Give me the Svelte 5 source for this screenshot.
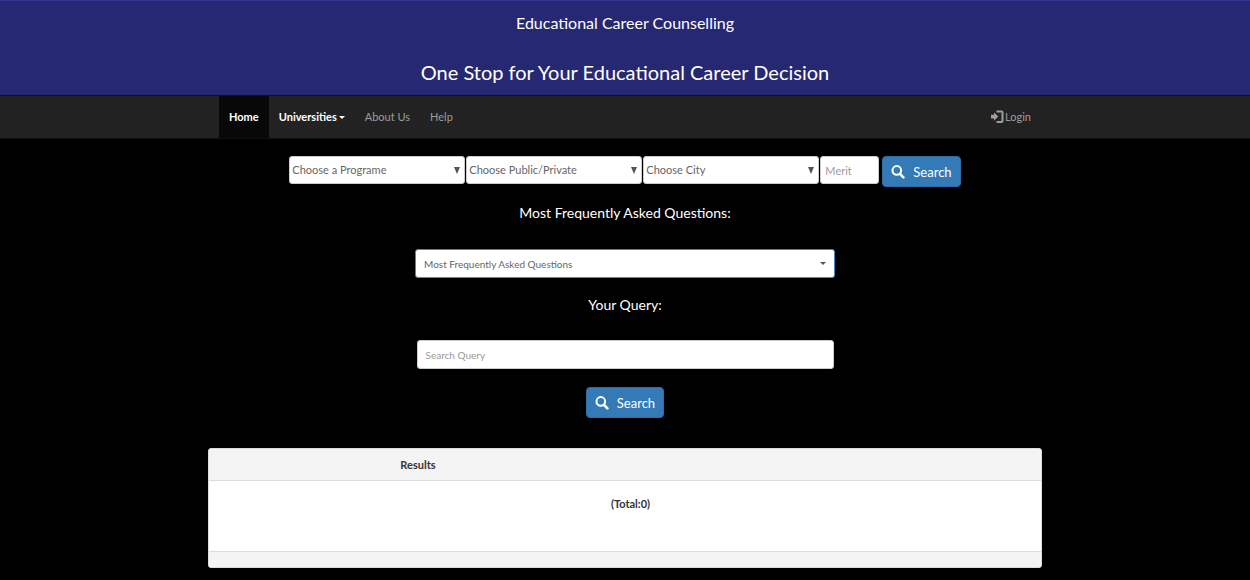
<script>
    const filters = [
        {name: "program", label: "Choose a Programe"},
        {name: "sector", label: "Choose Public/Private"},
        {name: "city", label: "Choose City"}
    ];

    let total = $state(0);
    let merit = $state("");
    let query = $state("");

    function search(event) {
        event.preventDefault();
    }
</script>

{#snippet searchButton()}
    <button class="search" type="submit">
        <svg viewBox="0 0 14 14" width="14" height="14" aria-hidden="true">
            <circle cx="5.8" cy="5.4" r="4.3" fill="none" stroke="currentColor" stroke-width="2" />
            <path d="M9 8.8l3.4 3.6" stroke="currentColor" stroke-width="2.6" stroke-linecap="round" />
        </svg>
        Search
    </button>
{/snippet}

<header>
    <p>Educational Career Counselling</p>
    <h1>One Stop for Your Educational Career Decision</h1>
</header>

<nav>
    <div class="container bar">
        <a class="active" href="#home">Home</a>
        <a class="bright" href="#universities">Universities <span class="caret"></span></a>
        <a href="#about">About Us</a>
        <a href="#help">Help</a>
        <a class="login" href="#login">
            <svg viewBox="0 0 14 14" width="14" height="14" aria-hidden="true">
                <path d="M1 4.8h3V2.4l4.4 4.2L4 10.8V8.4H1z" fill="currentColor" />
                <path d="M6.5 1.5h5q1 0 1 1v8.500q0 1-1 1h-5" fill="none" stroke="currentColor" stroke-width="2" />
            </svg>
            Login
        </a>
    </div>
</nav>

<main class="container">
    <form class="filters" onsubmit={search}>
        {#each filters as filter}
            <div class="select">
                <select name={filter.name} aria-label={filter.label}>
                    <option>{filter.label}</option>
                </select>
                <svg viewBox="0 0 6 7" width="6" height="7" aria-hidden="true"><path d="M0 0h6L3 7z" fill="currentColor" /></svg>
            </div>
        {/each}
        <input class="merit" type="text" placeholder="Merit" aria-label="Merit" bind:value={merit} />
        {@render searchButton()}
    </form>

    <form class="questions" onsubmit={search}>
        <label for="faq">Most Frequently Asked Questions:</label>
        <div class="select faq">
            <select id="faq">
                <option>Most Frequently Asked Questions</option>
            </select>
            <span class="caret"></span>
        </div>
        <label for="query">Your Query:</label>
        <input class="query" id="query" type="text" placeholder="Search Query" bind:value={query} />
        {@render searchButton()}
    </form>

    <section class="panel">
        <h2>Results</h2>
        <p>(Total:{total})</p>
        <footer></footer>
    </section>
</main>

<style>
    :global(body) {
        background-color: #000000;
        font-family: Lato, "Liberation Sans", sans-serif;
        font-size: 11px;
        line-height: 16px;
    }
    :global(body *) {
        box-sizing: border-box;
    }

    header {
        padding: 12px 16px 8px;
        background-color: #272872;
        border-top: 1px solid #34359a;
        color: white;
        text-align: center;
    }
    header p {
        margin: 0 0 24px;
        font-size: 16px;
        line-height: 20px;
    }
    h1 {
        margin: 0;
        font-size: 20px;
        font-weight: 400;
        line-height: 30px;
    }

    .container {
        max-width: 834px;
        margin: 0 auto;
    }

    nav {
        background-color: #222222;
        border-top: 1px solid #101010;
        border-bottom: 1px solid #101010;
    }
    .bar {
        display: flex;
        padding: 0 11px;
    }
    nav a {
        display: flex;
        align-items: center;
        height: 42px;
        padding: 0 10px;
        color: #9d9d9d;
        text-decoration: none;
    }
    nav .active {
        background-color: #080808;
        color: white;
        font-weight: 700;
    }
    nav .bright {
        color: white;
        font-weight: 700;
    }
    nav .login {
        gap: 1px;
        margin-left: auto;
        padding-right: 0;
    }
    .caret {
        border: 3px solid transparent;
        border-top: 3px solid currentColor;
        border-bottom: 0;
    }
    nav .caret {
        margin-left: 2px;
    }

    .filters {
        display: flex;
        flex-wrap: wrap;
        justify-content: center;
        gap: 1px;
        padding-top: 17px;
    }
    .select {
        display: grid;
        align-items: center;
        width: 176px;
        height: 28px;
        color: #555555;
    }
    .select > * {
        grid-area: 1 / 1;
    }
    .select svg,
    .select .caret {
        justify-self: end;
        margin-right: 5px;
        pointer-events: none;
    }
    select,
    input {
        height: 28px;
        border: 1px solid #cccccc;
        border-radius: 3px;
        background-color: white;
        color: #666666;
        font: inherit;
    }
    select {
        appearance: none;
        width: 100%;
        padding: 0 2px;
    }
    input::placeholder {
        color: #999999;
    }
    .merit {
        width: 59px;
        padding: 0 4px;
    }
    .search {
        display: flex;
        align-items: center;
        gap: 8px;
        height: 31px;
        padding: 0 8px;
        border: 1px solid #2e6da4;
        border-radius: 4px;
        background-color: #337ab7;
        color: white;
        font: inherit;
        font-size: 13px;
    }
    .filters .search {
        margin-left: 2px;
    }

    .questions {
        display: flex;
        flex-direction: column;
        align-items: center;
        padding-top: 16px;
    }
    label {
        color: white;
        font-size: 14px;
        line-height: 20px;
    }
    .faq {
        width: 420px;
        max-width: 100%;
        height: 29px;
        margin: 26px 0 17px;
    }
    .faq select {
        height: 29px;
        padding: 0 8px;
        border-color: #4a86c0;
        font-size: 10px;
    }
    .faq .caret {
        margin-right: 9px;
    }
    .query {
        width: 417px;
        max-width: 100%;
        height: 29px;
        margin: 25px 0 18px;
        padding: 0 8px;
        font-size: 10px;
    }

    .panel {
        margin-top: 30px;
        border: 1px solid #dddddd;
        border-radius: 3px;
        background-color: white;
        color: #333333;
        overflow: hidden;
    }
    h2 {
        margin: 0;
        padding: 8px 0 7px 23%;
        border-bottom: 1px solid #dddddd;
        background-color: #f4f4f4;
        font-size: 11px;
        line-height: 16px;
    }
    .panel p {
        margin: 0;
        padding: 15px 0 39px 11px;
        font-weight: 700;
        text-align: center;
    }
    footer {
        height: 16px;
        border-top: 1px solid #dddddd;
        background-color: #f4f4f4;
    }
</style>
